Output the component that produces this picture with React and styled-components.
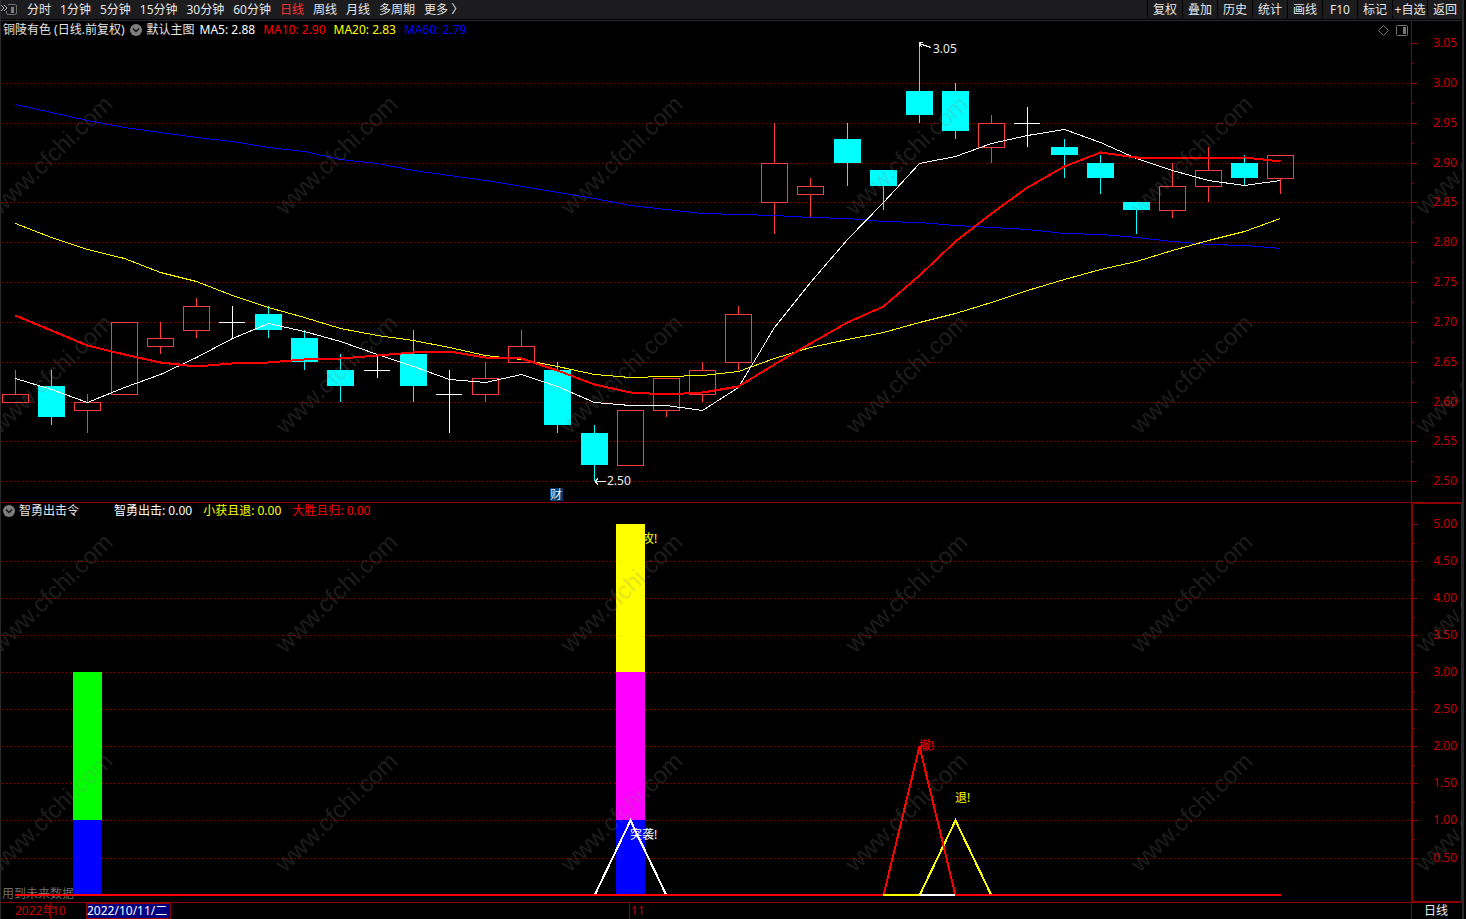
import React from 'react';
import styled, { createGlobalStyle } from 'styled-components';

const GlobalStyle = createGlobalStyle`
  * {
    box-sizing: border-box;
  }

  body {
    margin: 0;
    background: #000;
    color: #e6e6e6;
    font-family: 'Noto Sans', 'Noto Sans CJK SC', sans-serif;
    font-size: 12px;
    line-height: 16px;
    overflow: hidden;
  }
`;

// [open, high, low, close]
const CANDLES = [
  [2.6, 2.64, 2.6, 2.61], [2.62, 2.64, 2.57, 2.58], [2.59, 2.61, 2.56, 2.6],
  [2.61, 2.7, 2.61, 2.7], [2.67, 2.7, 2.66, 2.68], [2.69, 2.73, 2.68, 2.72],
  [2.7, 2.72, 2.68, 2.7], [2.71, 2.72, 2.68, 2.69], [2.68, 2.69, 2.64, 2.65],
  [2.64, 2.66, 2.6, 2.62], [2.64, 2.66, 2.63, 2.64], [2.66, 2.69, 2.6, 2.62],
  [2.61, 2.64, 2.56, 2.61], [2.61, 2.65, 2.6, 2.63], [2.65, 2.69, 2.65, 2.67],
  [2.64, 2.65, 2.56, 2.57], [2.56, 2.57, 2.5, 2.52], [2.52, 2.59, 2.52, 2.59],
  [2.59, 2.63, 2.58, 2.63], [2.61, 2.65, 2.6, 2.64], [2.65, 2.72, 2.64, 2.71],
  [2.85, 2.95, 2.81, 2.9], [2.86, 2.88, 2.83, 2.87], [2.93, 2.95, 2.87, 2.9],
  [2.89, 2.89, 2.84, 2.87], [2.99, 3.05, 2.95, 2.96], [2.99, 3.0, 2.93, 2.94],
  [2.92, 2.96, 2.9, 2.95], [2.95, 2.97, 2.92, 2.95], [2.92, 2.93, 2.88, 2.91],
  [2.9, 2.91, 2.86, 2.88], [2.85, 2.85, 2.81, 2.84], [2.84, 2.9, 2.83, 2.87],
  [2.87, 2.92, 2.85, 2.89], [2.9, 2.91, 2.87, 2.88], [2.88, 2.91, 2.86, 2.91],
];

// Averages that reach back before the first visible candle
const MA5_HEAD = [2.63, 2.616, 2.6, 2.618];
const MA10_HEAD = [2.709, 2.69, 2.671, 2.66, 2.65, 2.644, 2.648, 2.65, 2.653];
const MA20_HEAD = [
  2.824, 2.807, 2.792, 2.78, 2.763, 2.751, 2.734, 2.719, 2.706, 2.692,
  2.684, 2.677, 2.668, 2.659, 2.653, 2.644, 2.635, 2.631, 2.632,
];
const MA60 = [
  2.974, 2.963, 2.953, 2.945, 2.938, 2.932, 2.927, 2.92, 2.914, 2.905, 2.899, 2.891,
  2.884, 2.878, 2.871, 2.863, 2.855, 2.847, 2.842, 2.837, 2.835, 2.834, 2.831, 2.83,
  2.827, 2.825, 2.822, 2.819, 2.816, 2.812, 2.81, 2.806, 2.802, 2.798, 2.797, 2.793,
];

const average = (period, head) =>
  CANDLES.map((_, i) =>
    i < head.length
      ? head[i]
      : CANDLES.slice(i - period + 1, i + 1).reduce((sum, c) => sum + c[3], 0) / period
  );

const AVERAGES = [
  { name: 'MA60', color: '#0000ff', width: 1, values: MA60 },
  { name: 'MA20', color: '#ffff00', width: 1, values: average(20, MA20_HEAD) },
  { name: 'MA5', color: '#ffffff', width: 1, values: average(5, MA5_HEAD) },
  { name: 'MA10', color: '#ff0000', width: 2, values: average(10, MA10_HEAD) },
];

const PERIODS = ['分时', '1分钟', '5分钟', '15分钟', '30分钟', '60分钟', '日线', '周线', '月线', '多周期', '更多 〉'];
const TOOLS = ['复权', '叠加', '历史', '统计', '画线', 'F10', '标记', '+自选', '返回'];

const PRICES = Array.from({ length: 12 }, (_, i) => 3.05 - i * 0.05);
const LEVELS = Array.from({ length: 10 }, (_, i) => 5 - i * 0.5);

const PRICE_HEIGHT = 482;
const SIGNAL_HEIGHT = 399;

// x is relative to the plot, which starts 1px inside the window border
const xAt = (i) => Math.floor(14.55 + 36.155 * i);
const priceY = (price) => Math.floor(23.485 + (3.05 - price) * 796.8);
const levelY = (level) => Math.floor(392.1 - level * 74.15);

const polyline = (values, toY, from = 0) =>
  values.map((v, i) => `${xAt(i + from) + 0.5},${toY(v) + 0.5}`).join(' ');

const Grid = ({ values, toY }) =>
  values.map((v) => (
    <line
      key={v}
      x1="1"
      x2="100%"
      y1={toY(v) + 0.5}
      y2={toY(v) + 0.5}
      stroke="#960000"
      strokeDasharray="1 3"
    />
  ));

const Candle = ({ index, data }) => {
  const [open, high, low, close] = data;
  const x = xAt(index);
  const top = priceY(Math.max(open, close));
  const bottom = priceY(Math.min(open, close));

  if (open === close) {
    return (
      <g fill="#fff">
        <rect x={x} y={priceY(high)} width="1" height={priceY(low) - priceY(high)} />
        <rect x={x - 13} y={top} width="26" height="1" />
      </g>
    );
  }

  if (close < open) {
    return (
      <g fill="#0ff">
        <rect x={x} y={priceY(high)} width="1" height={priceY(low) - priceY(high)} />
        <rect x={x - 13} y={top} width="27" height={bottom - top} />
      </g>
    );
  }

  return (
    <g fill="#ff3c3c">
      <rect x={x} y={priceY(high)} width="1" height={top - priceY(high)} />
      <rect x={x} y={bottom} width="1" height={priceY(low) - bottom} />
      <rect x={x - 12.5} y={top + 0.5} width="26" height={bottom - top} fill="none" stroke="#ff3c3c" />
    </g>
  );
};

const PriceChart = () => (
  <Plot $height={PRICE_HEIGHT} shapeRendering="crispEdges">
    <Grid values={PRICES.slice(1)} toY={priceY} />
    {CANDLES.map((candle, i) => (
      <Candle key={i} index={i} data={candle} />
    ))}
    {AVERAGES.map((ma) => (
      <polyline
        key={ma.name}
        points={polyline(ma.values, priceY)}
        fill="none"
        stroke={ma.color}
        strokeWidth={ma.width}
      />
    ))}
    <path d="M918 22.5h4M918.5 22v5M918 23.5l12 4M918 24l3 3" fill="none" stroke="#eee" />
    <PlotText x="932" y="33">3.05</PlotText>
    <path d="M594 461.5h11M594 461.5l3-3M594 461.5l3 3" fill="none" stroke="#eee" />
    <PlotText x="606" y="465">2.50</PlotText>
    <rect x="549" y="468" width="13" height="13" fill="#003a70" />
    <PlotText x="549" y="479">财</PlotText>
  </Plot>
);

const SignalChart = () => {
  const base = levelY(0);
  return (
    <Plot $height={SIGNAL_HEIGHT} shapeRendering="crispEdges">
      <Grid values={LEVELS.slice(1)} toY={levelY} />
      <PlotText x="1" y="395" $color="#6e6e6e">用到未来数据</PlotText>
      <PlotText x="641" y="40" $color="#ff0">攻!</PlotText>
      <rect x="72" y={levelY(3)} width="29" height={levelY(1) - levelY(3)} fill="#0f0" />
      <rect x="72" y={levelY(1)} width="29" height={base - levelY(1)} fill="#00f" />
      <rect x="615" y={levelY(5)} width="29" height={levelY(3) - levelY(5)} fill="#ff0" />
      <rect x="615" y={levelY(3)} width="29" height={levelY(1) - levelY(3)} fill="#f0f" />
      <rect x="615" y={levelY(1)} width="29" height={base - levelY(1)} fill="#00f" />
      <g fill="none" strokeWidth="2">
        <polyline points={polyline([0, 1, 0], levelY, 16)} stroke="#fff" />
        <polyline points={polyline([0, 1, 0], levelY, 25)} stroke="#ff0" />
        <polyline points={polyline([0, 2, 0], levelY, 24)} stroke="#f00" />
        <path d={`M${xAt(0)} ${base}H${xAt(24)}M${xAt(26)} ${base}H${xAt(35) + 1}`} stroke="#f00" />
        <path d={`M${xAt(24)} ${base}H${xAt(25)}`} stroke="#ff0" />
        <path d={`M${xAt(25)} ${base}H${xAt(26)}`} stroke="#fff" />
      </g>
      <PlotText x="629" y="336" $color="#fff">突袭!</PlotText>
      <PlotText x="918" y="247" $color="#f00">撤!</PlotText>
      <PlotText x="954" y="299" $color="#ff0">退!</PlotText>
    </Plot>
  );
};

const AxisScale = ({ values, toY, height, labelX }) => (
  <Scale $height={height} shapeRendering="crispEdges">
    {values.map((v, i) => {
      const y = toY(v);
      const gap = i < values.length - 1 ? toY(values[i + 1]) - y : 0;
      return (
        <g key={v} fill="#8c0000">
          <rect x="0" y={y} width="5" height="1" />
          {gap > 0 && <rect x="0" y={y + Math.round(gap / 2)} width="2" height="1" />}
          <AxisLabel x={labelX} y={y + 4}>{v.toFixed(2)}</AxisLabel>
        </g>
      );
    })}
  </Scale>
);

const Chevron = () => (
  <ChevronIcon viewBox="0 0 12 12">
    <circle cx="6" cy="6" r="6" fill="#7d7d7d" />
    <path d="M3 4.5l3 3 3-3" fill="none" stroke="#111" strokeWidth="1.4" />
  </ChevronIcon>
);

const App = () => (
  <Page>
    <GlobalStyle />
    <TopBar>
      <PanelButton aria-label="panel">
        <svg width="17" height="19" fill="none">
          <path d="M0 5l3 3-3 3M3 5l3 3-3 3" stroke="#aaa" />
          <path d="M7 4.500h7q1.500 0 1.500 1.500v7q0 1.500-1.500 1.500h-7q-1.500 0-1.500-1.500v-2" stroke="#6e6e6e" />
          <rect x="10" y="7" width="3" height="6" fill="#7d7d7d" />
        </svg>
      </PanelButton>
      <Periods>
        {PERIODS.map((label) => (
          <PeriodButton key={label} $active={label === '日线'}>{label}</PeriodButton>
        ))}
      </Periods>
      <Tools>
        {TOOLS.map((label) => (
          <ToolButton key={label}>{label}</ToolButton>
        ))}
      </Tools>
    </TopBar>

    <PricePanel>
      <PlotArea>
        <PriceChart />
        <Legend $top={2} $gap={5}>
          <span>铜陵有色 (日线.前复权)</span>
          <Chevron />
          <span>默认主图</span>
          <Values $gap={8}>
            <Value $color="#fff">MA5: 2.88</Value>
            <Value $color="#f00">MA10: 2.90</Value>
            <Value $color="#ff0">MA20: 2.83</Value>
            <Value $color="#00f">MA60: 2.79</Value>
          </Values>
        </Legend>
        <Corner>
          <svg width="11" height="11" fill="none" stroke="#777">
            <path d="M5.5 .5l5 5-5 5-5-5z" />
          </svg>
          <svg width="12" height="12" fill="none" stroke="#777">
            <rect x=".5" y=".5" width="11" height="10" rx="1" />
            <rect x="7" y="2" width="3" height="7" fill="#777" stroke="none" />
          </svg>
        </Corner>
      </PlotArea>
      <PriceAxis>
        <AxisScale values={PRICES} toY={priceY} height={PRICE_HEIGHT} labelX={45} />
      </PriceAxis>
    </PricePanel>

    <SignalPanel>
      <PlotArea>
        <SignalChart />
        <Legend $top={0} $gap={4}>
          <Chevron />
          <SignalName>智勇出击令</SignalName>
          <Values $gap={11}>
            <Value $color="#fff">智勇出击: 0.00</Value>
            <Value $color="#ff0">小获且退: 0.00</Value>
            <Value $color="#f00">大胜且归: 0.00</Value>
          </Values>
        </Legend>
      </PlotArea>
      <SignalAxis>
        <AxisScale values={LEVELS} toY={levelY} height={SIGNAL_HEIGHT} labelX={44} />
      </SignalAxis>
    </SignalPanel>

    <DateBar>
      <Dates>
        <Month>2022年</Month>
        <MarkedMonth>10</MarkedMonth>
        <SelectedDate>2022/10/11/二</SelectedDate>
        <MarkedMonth>11</MarkedMonth>
      </Dates>
      <PeriodName>日线</PeriodName>
    </DateBar>

    <Watermark aria-hidden="true">
      <defs>
        <pattern id="mark" width="285" height="219" x="274" y="2" patternUnits="userSpaceOnUse">
          <text transform="translate(10 214) rotate(-44)">www.cfchi.com</text>
        </pattern>
      </defs>
      <rect width="100%" height="100%" fill="url(#mark)" />
    </Watermark>
  </Page>
);

// Styled components
const Page = styled.div`
  position: relative;
  margin-right: 2px;
  border-left: 1px solid #2a2a2c;
  border-right: 2px solid #2a2a2c;
`;

const TopBar = styled.header`
  display: flex;
  height: 20px;
  background: #1c1c1e;
  border-bottom: 1px solid #000;
`;

const BarButton = styled.button`
  border: 0;
  padding: 0;
  background: none;
  color: #e6e6e6;
  font: inherit;
  white-space: nowrap;
`;

const PanelButton = styled(BarButton)`
  width: 22px;
  text-align: left;

  svg {
    display: block;
  }
`;

const Periods = styled.nav`
  display: flex;
`;

const PeriodButton = styled(BarButton)`
  padding: 0 5px 0 4px;
  color: ${(props) => (props.$active ? '#ff3232' : '#e6e6e6')};
`;

const Tools = styled.div`
  display: flex;
  margin-left: auto;
`;

const ToolButton = styled(BarButton)`
  width: 35px;
  border-left: 1px solid #000;
`;

const Panel = styled.section`
  display: grid;
  grid-template-columns: minmax(0, 1fr) 51px;
  border-bottom: 1px solid #8c0000;
`;

const PricePanel = styled(Panel)`
  box-shadow: inset 0 1px #2a2a2c;
`;

const SignalPanel = styled(Panel)``;

const PlotArea = styled.div`
  position: relative;
`;

const Plot = styled.svg`
  display: block;
  width: 100%;
  height: ${(props) => props.$height}px;
`;

const PlotText = styled.text`
  fill: ${(props) => props.$color || '#eee'};
`;

const PriceAxis = styled.div`
  border-left: 1px solid #8c0000;
`;

const SignalAxis = styled.div`
  border: solid #8c0000;
  border-width: 0 1px 1px 2px;
  box-shadow: inset 0 1px #8c0000;
`;

const Scale = styled.svg`
  display: block;
  width: 100%;
  height: ${(props) => props.$height - 1}px;
`;

const AxisLabel = styled.text`
  fill: #c80000;
  text-anchor: end;
`;

// Sits over the top of the plot
const Legend = styled.div`
  position: absolute;
  top: ${(props) => props.$top}px;
  left: 2px;
  display: flex;
  align-items: center;
  gap: ${(props) => props.$gap}px;
  white-space: nowrap;
`;

const Values = styled.div`
  display: flex;
  gap: ${(props) => props.$gap}px;
`;

const Value = styled.span`
  color: ${(props) => props.$color};
`;

const SignalName = styled.span`
  margin-right: 31px;
`;

const ChevronIcon = styled.svg`
  width: 12px;
  height: 12px;
`;

const Corner = styled.div`
  position: absolute;
  top: 5px;
  right: 3px;
  display: flex;
  gap: 7px;
`;

const DateBar = styled.footer`
  display: grid;
  grid-template-columns: minmax(0, 1fr) 51px;
  height: 16px;
  color: #c80000;
`;

const Dates = styled.div`
  display: grid;
  grid-template-columns: 35px 36px 543px auto;
  padding-left: 14px;
  justify-content: start;
`;

const Month = styled.span`
  white-space: nowrap;
`;

const MarkedMonth = styled.span`
  border-left: 1px solid #8c0000;
  padding-left: 1px;
`;

const SelectedDate = styled.time`
  justify-self: start;
  padding-right: 3px;
  border: 1px solid #8c0000;
  background: #000080;
  color: #fff;
  line-height: 14px;
`;

const PeriodName = styled.span`
  border-left: 1px solid #8c0000;
  padding-left: 12px;
  color: #eee;
`;

const Watermark = styled.svg`
  position: absolute;
  inset: 0;
  width: 100%;
  height: 100%;
  pointer-events: none;

  text {
    fill: rgba(128, 128, 128, 0.22);
    font-family: 'Liberation Sans', Arial, sans-serif;
    font-size: 24px;
  }
`;

export default App;
